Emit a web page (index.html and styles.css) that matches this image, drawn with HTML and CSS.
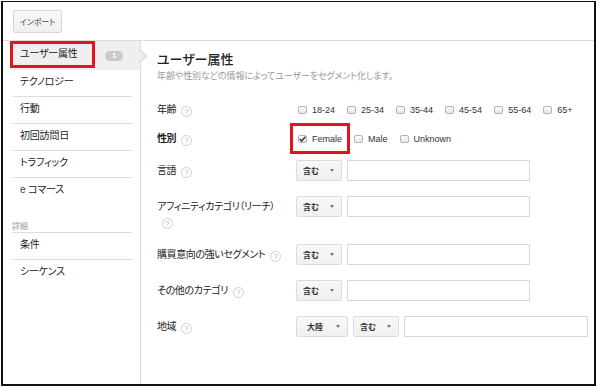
FILE: index.html
```html
<!DOCTYPE html>
<html lang="ja">
<head>
    <meta charset="UTF-8">
    <title>セグメント — ユーザー属性</title>
    <link rel="stylesheet" href="styles.css">
</head>
<body>
    <div class="frame">
        <div class="toolbar">
            <button class="btn">インポート</button>
        </div>
        <div class="layout">
            <div class="sidebar">
                <div class="nav">
                    <div class="nav-item active">
                        <span class="mark">ユーザー属性</span>
                        <span class="badge">1</span>
                    </div>
                    <div class="nav-item">テクノロジー</div>
                    <div class="nav-item">行動</div>
                    <div class="nav-item">初回訪問日</div>
                    <div class="nav-item">トラフィック</div>
                    <div class="nav-item last"><span class="ecom">e</span> コマース</div>
                    <div class="nav-group">詳細</div>
                    <div class="nav-item">条件</div>
                    <div class="nav-item last">シーケンス</div>
                </div>
            </div>
            <div class="main">
                <h1>ユーザー属性</h1>
                <p class="desc">年齢や性別などの情報によってユーザーをセグメント化します。</p>

                <div class="form">
                    <div class="row row-age">
                        <div class="row-label">年齢<span class="help">?</span></div>
                        <div class="checks">
                            <span class="check"><span class="box"></span>18-24</span>
                            <span class="check"><span class="box"></span>25-34</span>
                            <span class="check"><span class="box"></span>35-44</span>
                            <span class="check"><span class="box"></span>45-54</span>
                            <span class="check"><span class="box"></span>55-64</span>
                            <span class="check"><span class="box"></span>65+</span>
                        </div>
                    </div>
                    <div class="row row-gender">
                        <div class="row-label bold">性別<span class="help">?</span></div>
                        <div class="checks">
                            <span class="check marked"><span class="box checked"><svg width="7" height="6" viewBox="0 0 7 6"><path d="M0.8 3.1 L2.7 5 L6.3 0.8" fill="none" stroke="#333" stroke-width="1.4"/></svg></span>Female</span>
                            <span class="check"><span class="box"></span>Male</span>
                            <span class="check"><span class="box"></span>Unknown</span>
                        </div>
                    </div>
                    <div class="row">
                        <div class="row-label">言語<span class="help">?</span></div>
                        <div class="controls">
                            <span class="select">含む<i class="caret"></i></span>
                            <span class="input"></span>
                        </div>
                    </div>
                    <div class="row">
                        <div class="row-label">アフィニティカテゴリ（リーチ）<span class="help">?</span></div>
                        <div class="controls">
                            <span class="select">含む<i class="caret"></i></span>
                            <span class="input"></span>
                        </div>
                    </div>
                    <div class="row">
                        <div class="row-label">購買意向の強いセグメント<span class="help">?</span></div>
                        <div class="controls">
                            <span class="select">含む<i class="caret"></i></span>
                            <span class="input"></span>
                        </div>
                    </div>
                    <div class="row">
                        <div class="row-label">その他のカテゴリ<span class="help">?</span></div>
                        <div class="controls">
                            <span class="select">含む<i class="caret"></i></span>
                            <span class="input"></span>
                        </div>
                    </div>
                    <div class="row">
                        <div class="row-label">地域<span class="help">?</span></div>
                        <div class="controls">
                            <span class="select wide">大陸<i class="caret"></i></span>
                            <span class="select">含む<i class="caret"></i></span>
                            <span class="input long"></span>
                        </div>
                    </div>
                </div>
            </div>
        </div>
    </div>
</body>
</html>
```

FILE: styles.css
```css
body {
    margin: 0;
    background: #fff;
    font-family: "Liberation Sans", "Noto Sans CJK JP", sans-serif;
    font-feature-settings: "palt";
    color: #333;
}
.frame {
    margin: 1px 0 0 1px;
    width: 595px;
    height: 385px;
    box-sizing: border-box;
    border: 2px solid #111;
    border-top-width: 1px;
    display: flex;
    flex-direction: column;
    overflow: hidden;
}
.toolbar {
    height: 39px;
    padding: 8px 0 0 10px;
    box-sizing: border-box;
    border-bottom: 1px solid #ddd;
    flex-shrink: 0;
}
.btn {
    width: 49px;
    height: 23px;
    padding: 0;
    border: 1px solid #d6d6d6;
    border-radius: 2px;
    background: linear-gradient(#f8f8f8, #f0f0f0);
    font-family: inherit;
    font-feature-settings: "palt";
    font-size: 8px;
    color: #444;
}
.layout {
    flex: 1;
    display: flex;
}
.sidebar {
    width: 138px;
    box-sizing: border-box;
    border-right: 1px solid #ddd;
    flex-shrink: 0;
}
.nav {
    padding: 0 8px 0 10px;
}
.nav-item {
    height: 26px;
    line-height: 24px;
    padding-left: 7px;
    border-bottom: 1px solid #ddd;
    font-size: 10px;
    letter-spacing: -0.2px;
    color: #222;
}
.nav-item.last {
    border-bottom: none;
}
.nav-item.active {
    position: relative;
    height: 29px;
    margin: 0 -8px 0 -3px;
    padding: 0 17px 0 0;
    border-bottom: none;
    background: #efefef;
    display: flex;
    justify-content: space-between;
    align-items: center;
}
.nav-item.active::after {
    content: "";
    position: absolute;
    right: -5px;
    top: 10px;
    width: 9px;
    height: 9px;
    background: #efefef;
    border-top: 1px solid #d4d4d4;
    border-right: 1px solid #d4d4d4;
    transform: rotate(45deg);
}
.mark {
    align-self: flex-start;
    width: 85px;
    height: 27px;
    line-height: 26px;
    padding-left: 10px;
    box-sizing: border-box;
    box-shadow: inset 0 0 0 3px #e5141c;
}
.badge {
    width: 18px;
    height: 10px;
    border-radius: 5px;
    background: #c9c9c9;
    color: #fff;
    font-size: 8px;
    font-weight: bold;
    line-height: 10px;
    text-align: center;
}
.ecom {
    color: #2a3a6a;
}
.nav-group {
    margin: 17px 0 0 -1px;
    height: 11px;
    line-height: 11px;
    font-size: 8px;
    color: #999;
    border-bottom: 1px solid #ddd;
}
.main {
    flex: 1;
    padding: 10px 16px;
}
h1 {
    margin: 0;
    font-size: 13px;
    line-height: 17px;
    font-weight: 500;
    color: #222;
}
.desc {
    margin: 2px 0 0;
    font-size: 9px;
    line-height: 12px;
    letter-spacing: -0.1px;
    color: #999;
}
.form {
    margin-top: 17px;
}
.row {
    display: flex;
    align-items: flex-start;
    margin-bottom: 15px;
}
.row-age {
    margin-bottom: 8px;
}
.row-gender {
    margin-bottom: 11px;
}
.row-label {
    width: 139px;
    padding: 3px 10px 0 0;
    box-sizing: border-box;
    line-height: 15px;
    font-size: 10px;
    letter-spacing: -0.4px;
    color: #222;
    flex-shrink: 0;
}
.row-label.bold {
    font-weight: bold;
}
.help {
    display: inline-block;
    width: 9px;
    height: 9px;
    margin-left: 5px;
    border: 1px solid #cfcfcf;
    border-radius: 50%;
    font-size: 7px;
    line-height: 9px;
    letter-spacing: 0;
    font-weight: normal;
    text-align: center;
    color: #b0b0b0;
    vertical-align: -1px;
}
.checks {
    height: 21px;
    padding-left: 2px;
    display: flex;
    align-items: center;
    gap: 12px;
    font-size: 9px;
    color: #333;
}
.check {
    display: flex;
    align-items: center;
    gap: 5px;
    height: 15px;
}
.check.marked {
    outline: 3px solid #e5141c;
    outline-offset: 5px;
}
.box {
    width: 9px;
    height: 8px;
    box-sizing: border-box;
    border: 1px solid #b3b3b3;
    border-radius: 2px;
    background: linear-gradient(#fdfdfd, #e6e6e6);
    display: flex;
    align-items: center;
    justify-content: center;
}
.box svg {
    display: block;
}
.controls {
    display: flex;
    gap: 5px;
}
.select {
    width: 46px;
    height: 21px;
    padding: 0 7px 0 6px;
    box-sizing: border-box;
    border: 1px solid #dcdcdc;
    border-radius: 2px;
    background: linear-gradient(#f8f8f8, #f0f0f0);
    display: flex;
    align-items: center;
    justify-content: space-between;
    font-size: 8px;
    font-weight: bold;
    color: #333;
}
.select.wide {
    width: 52px;
    padding: 0 7px 0 10px;
}
.caret {
    width: 0;
    height: 0;
    border-left: 2.5px solid transparent;
    border-right: 2.5px solid transparent;
    border-top: 3px solid #777;
}
.input {
    width: 183px;
    height: 21px;
    box-sizing: border-box;
    border: 1px solid #d9d9d9;
    background: #fff;
}
.input.long {
    width: 184px;
}
```
